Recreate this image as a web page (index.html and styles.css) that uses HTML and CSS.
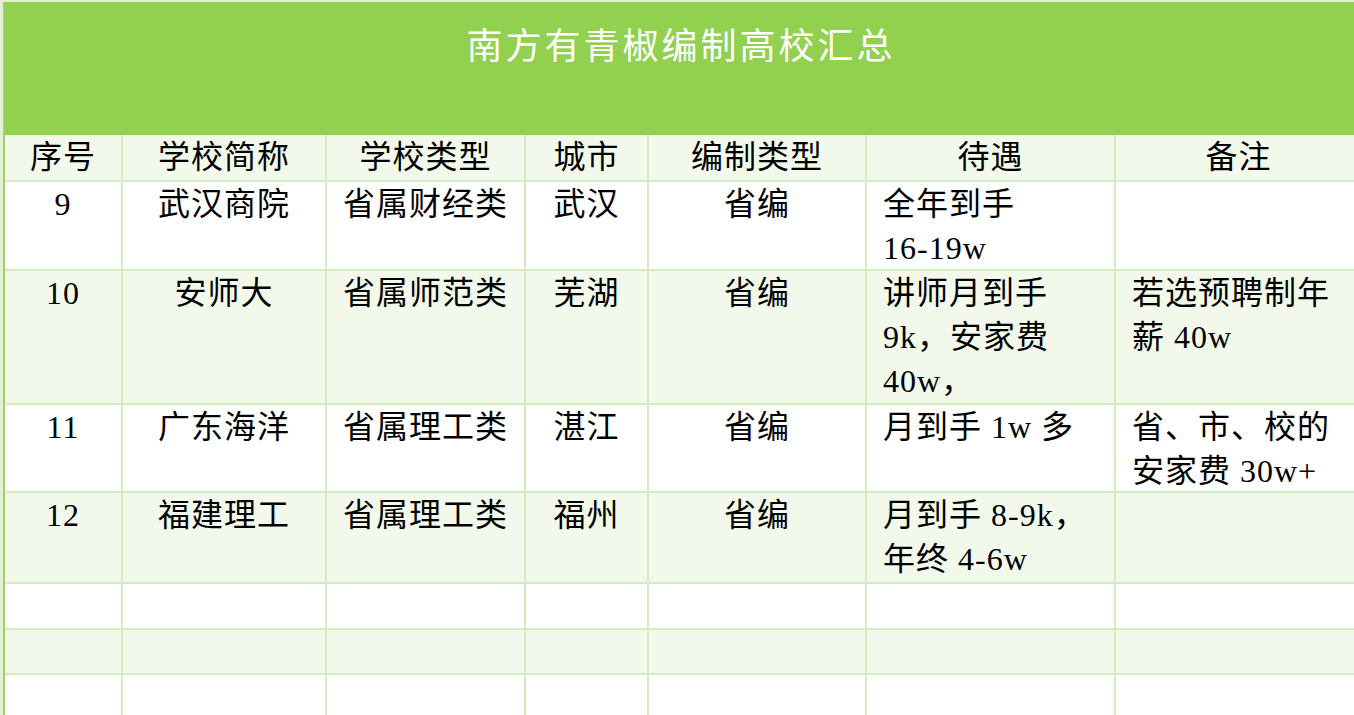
FILE: index.html
```html
<!DOCTYPE html>
<html lang="zh-CN">
<head>
<meta charset="utf-8">
<title>南方有青椒编制高校汇总</title>
<link rel="stylesheet" href="styles.css">
</head>
<body>
<div class="sheet">
  <div class="title">南方有青椒编制高校汇总</div>
  <div class="grid">
    <div class="row alt head">
      <div class="c">序号</div>
      <div class="c">学校简称</div>
      <div class="c">学校类型</div>
      <div class="c">城市</div>
      <div class="c">编制类型</div>
      <div class="c">待遇</div>
      <div class="c">备注</div>
    </div>
    <div class="row">
      <div class="c">9</div>
      <div class="c">武汉商院</div>
      <div class="c">省属财经类</div>
      <div class="c">武汉</div>
      <div class="c">省编</div>
      <div class="l">全年到手<br>16-19w</div>
      <div class="l"></div>
    </div>
    <div class="row alt">
      <div class="c">10</div>
      <div class="c">安师大</div>
      <div class="c">省属师范类</div>
      <div class="c">芜湖</div>
      <div class="c">省编</div>
      <div class="l">讲师月到手<br>9k，安家费<br>40w，</div>
      <div class="l">若选预聘制年<br>薪 40w</div>
    </div>
    <div class="row">
      <div class="c">11</div>
      <div class="c">广东海洋</div>
      <div class="c">省属理工类</div>
      <div class="c">湛江</div>
      <div class="c">省编</div>
      <div class="l">月到手 1w 多</div>
      <div class="l">省、市、校的<br>安家费 30w+</div>
    </div>
    <div class="row alt">
      <div class="c">12</div>
      <div class="c">福建理工</div>
      <div class="c">省属理工类</div>
      <div class="c">福州</div>
      <div class="c">省编</div>
      <div class="l">月到手 8-9k，<br>年终 4-6w</div>
      <div class="l"></div>
    </div>
    <div class="row">
      <div></div><div></div><div></div><div></div><div></div><div></div><div></div>
    </div>
    <div class="row alt">
      <div></div><div></div><div></div><div></div><div></div><div></div><div></div>
    </div>
    <div class="row">
      <div></div><div></div><div></div><div></div><div></div><div></div><div></div>
    </div>
  </div>
</div>
</body>
</html>
```

FILE: styles.css
```css
html, body {
  margin: 0;
  padding: 0;
  background: #e3f0d6;
  overflow: hidden;
  height: 715px;
}

.sheet {
  margin-top: 2px;
  margin-left: 3px;
  border-left: 2px solid #9ed36a;
  width: 1360px;
  font-family: "Liberation Serif", "Noto Sans CJK SC", serif;
  color: #000;
}

.title {
  background: #92d050;
  height: 133px;
  box-sizing: border-box;
  padding-top: 20px;
  text-align: center;
  color: #fff;
  font-size: 36px;
  line-height: 50px;
  letter-spacing: 3px;
  padding-right: 8px;
}

.grid {
  display: grid;
  grid-template-columns: 116px 202px 197px 121px 216px 247px 245px;
  grid-template-rows: 45px 87px 132px 86px 89px 44px 43px 60px;
  column-gap: 2px;
  row-gap: 2px;
  background: #d5ecc3;
}

.row {
  display: contents;
}

.row > div {
  background: #ffffff;
  font-size: 32px;
  line-height: 44px;
  letter-spacing: 1px;
  white-space: nowrap;
  overflow: hidden;
}

.row.alt > div {
  background: #f2f9ea;
}

.row > .c {
  text-align: center;
}

.row > .l {
  text-align: left;
  padding-left: 16px;
}

.row.head > div {
  text-align: center;
  padding-left: 0;
}
```
